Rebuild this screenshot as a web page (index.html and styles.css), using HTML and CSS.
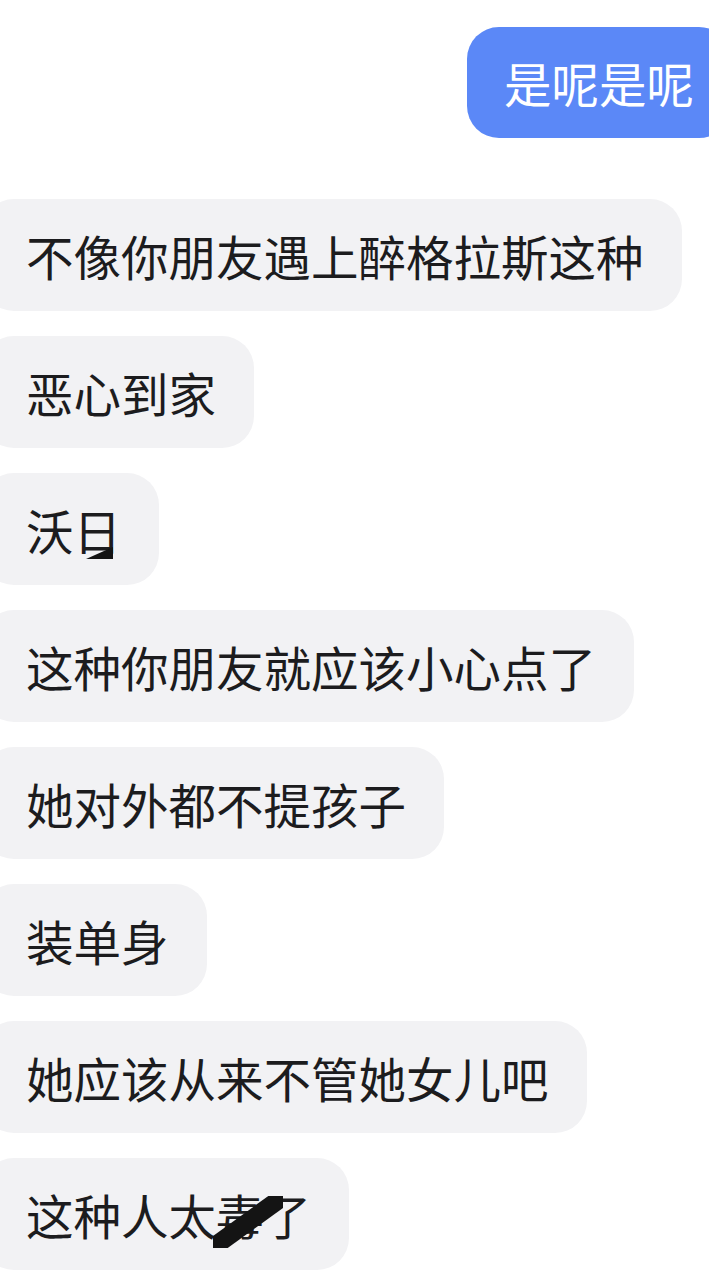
FILE: index.html
```html
<!DOCTYPE html>
<html lang="zh-CN">
<head>
    <meta charset="UTF-8">
    <meta name="viewport" content="width=device-width, initial-scale=1.0">
    <title>聊天</title>
    <link rel="stylesheet" href="styles.css">
</head>
<body>
    <div class="chat">
        <div class="msg mine">是呢是呢</div>
        <div class="msg first">不像你朋友遇上醉格拉斯这种</div>
        <div class="msg">恶心到家</div>
        <div class="msg">沃日<span class="mark mark-ri"></span></div>
        <div class="msg">这种你朋友就应该小心点了</div>
        <div class="msg">她对外都不提孩子</div>
        <div class="msg">装单身</div>
        <div class="msg">她应该从来不管她女儿吧</div>
        <div class="msg">这种人太毒了<span class="mark mark-du"></span></div>
    </div>
</body>
</html>
```

FILE: styles.css
```css
html, body {
    margin: 0;
    padding: 0;
    background: #ffffff;
    overflow: hidden;
    font-family: "Noto Sans CJK SC", "Noto Sans", sans-serif;
}
.chat {
    display: flex;
    flex-direction: column;
    align-items: flex-start;
    gap: 25px;
    padding-top: 27px;
}
.msg {
    position: relative;
    height: 112px;
    line-height: 114px;
    font-size: 47.5px;
    color: #1c1c1e;
    background: #f2f2f4;
    border-radius: 32px;
    margin-left: -18px;
    padding: 0 38px 0 44px;
    white-space: nowrap;
}
.first {
    margin-top: 36px;
}
.mine {
    align-self: flex-end;
    height: 111px;
    line-height: 111px;
    margin-left: 0;
    margin-right: -22px;
    padding: 0 37px;
    background: #5b88f7;
    color: #ffffff;
}
/* black scribbles over the obscured words */
.mark {
    position: absolute;
    background: #141414;
}
.mark-ri {
    left: 104px;
    top: 74px;
    width: 27px;
    height: 12px;
    clip-path: polygon(100% 0, 100% 100%, 0 100%);
}
.mark-du {
    left: 231px;
    top: 38px;
    width: 70px;
    height: 52px;
    clip-path: polygon(0 100%, 0 77%, 79% 0, 100% 0, 100% 23%, 21% 100%);
}
```
